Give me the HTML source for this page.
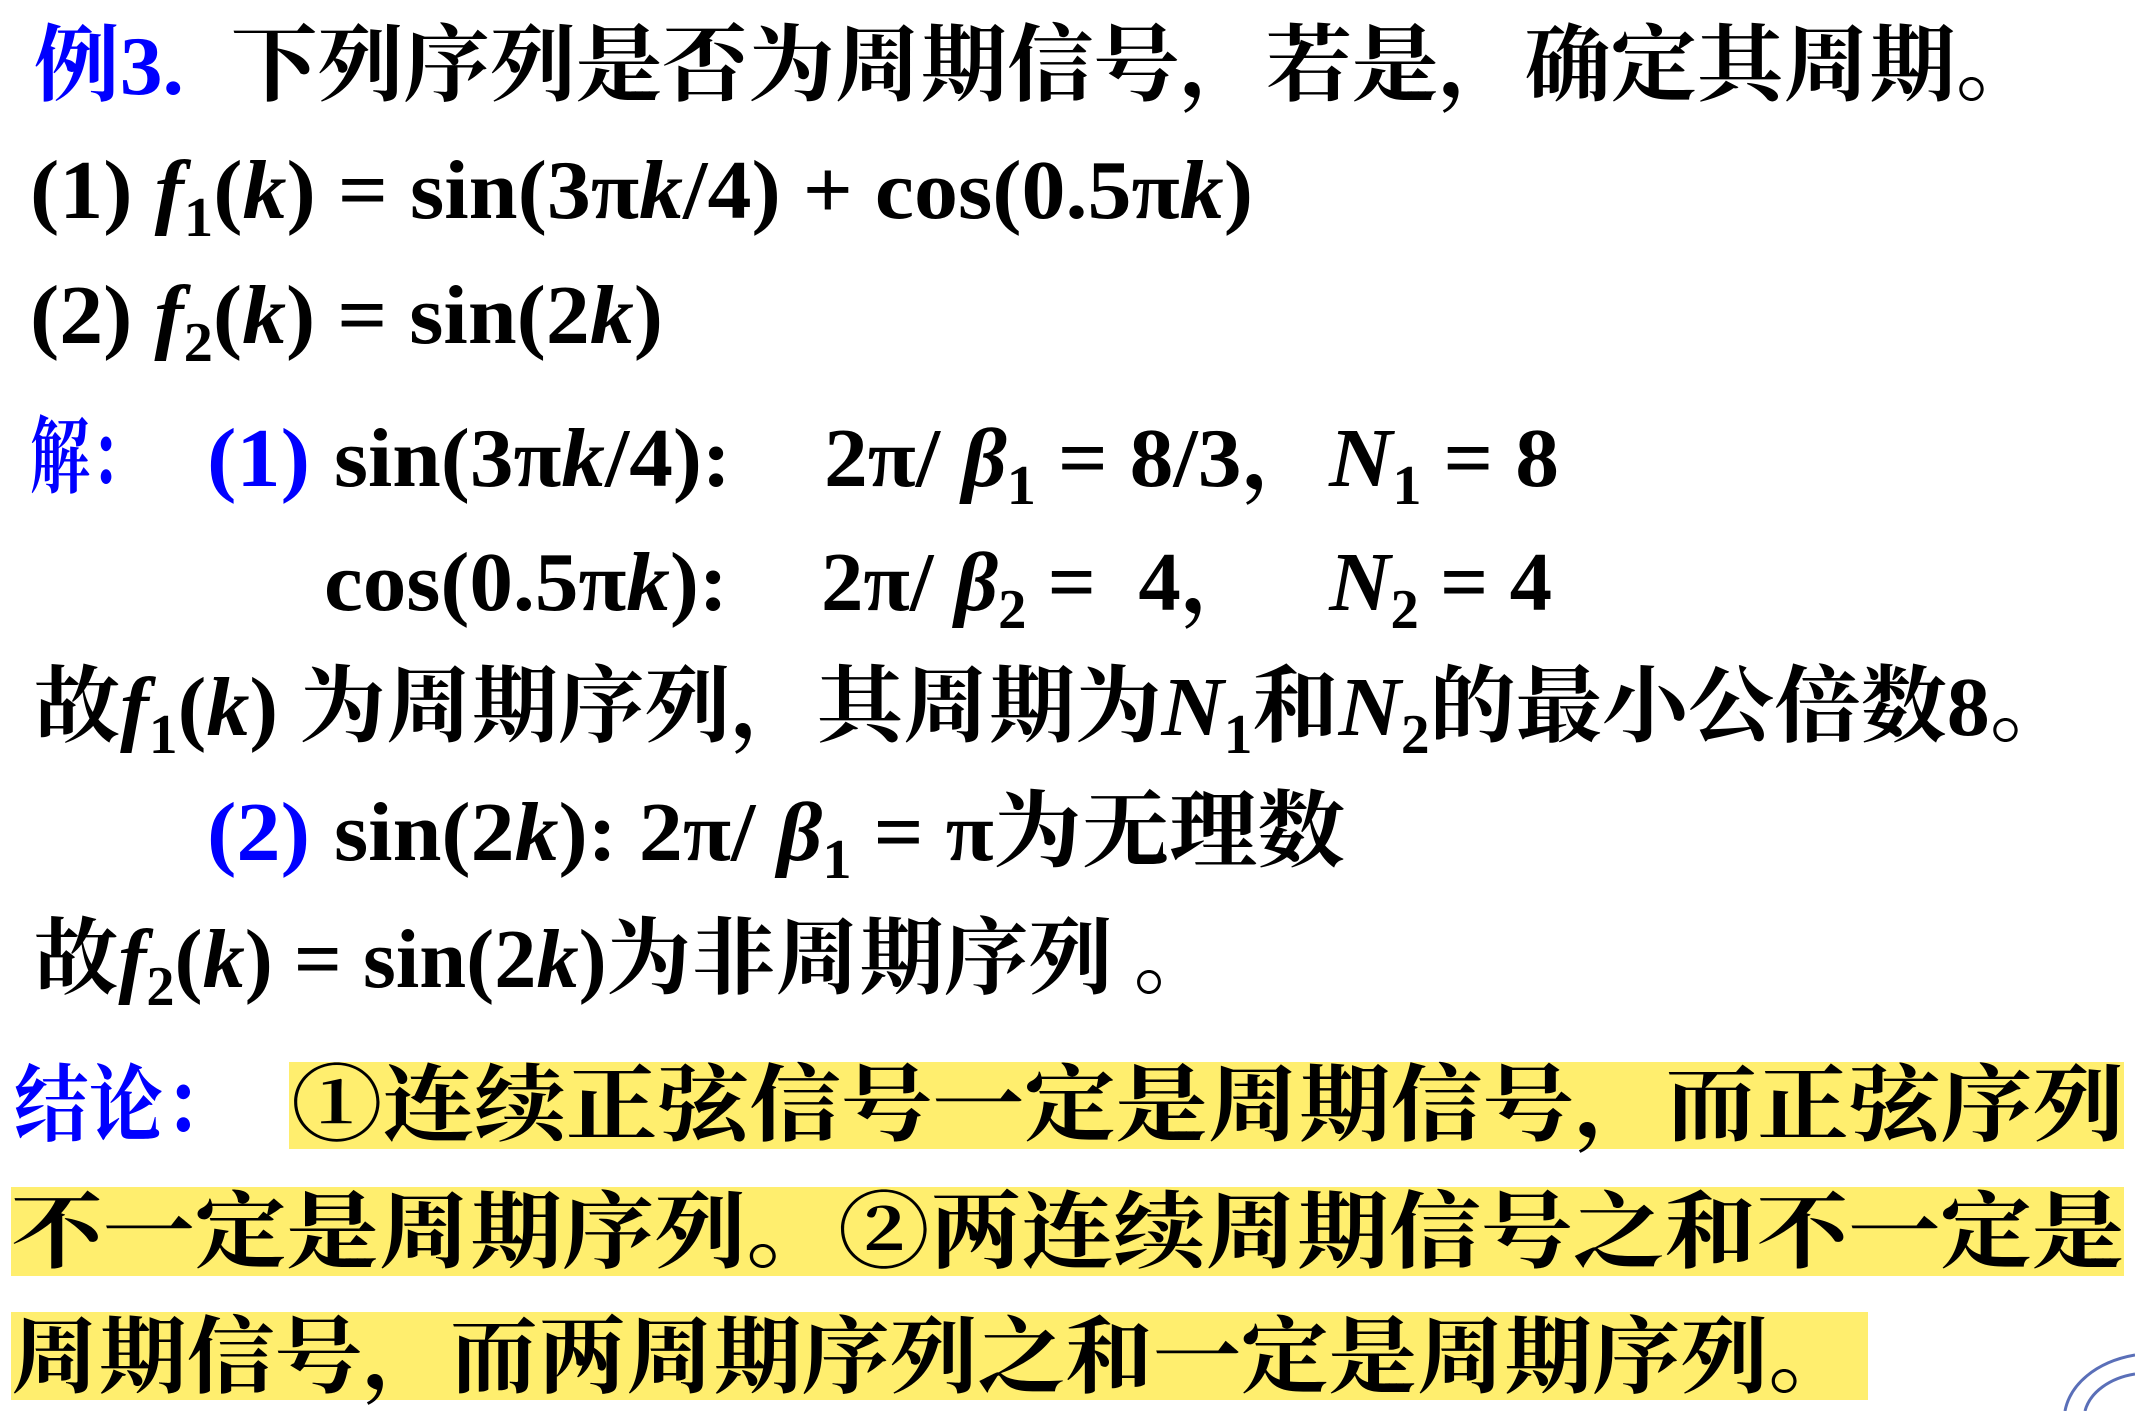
<!DOCTYPE html>
<html><head><meta charset="utf-8">
<style>
html,body{margin:0;padding:0;background:#fff;}
svg{display:block;}
.m{font-family:"Liberation Serif","Noto Serif CJK SC",serif;font-weight:bold;}
.c{font-family:"Liberation Serif","Noto Serif CJK SC","Noto Sans CJK SC",serif;font-weight:bold;}
.i{font-style:italic;}
.b{fill:#0000ff;}
</style></head>
<body>
<svg width="2135" height="1411" viewBox="0 0 2135 1411" xmlns="http://www.w3.org/2000/svg">
<rect x="289" y="1062" width="1835" height="87" fill="#ffee6e"/>
<rect x="11" y="1187" width="2113" height="89" fill="#ffee6e"/>
<rect x="11" y="1312" width="1857" height="88" fill="#ffee6e"/>

<g font-size="84">
<text class="c b" x="34" y="94" textLength="150" lengthAdjust="spacingAndGlyphs">例3.</text>
<text class="c" x="231" y="94" textLength="1811" lengthAdjust="spacingAndGlyphs">下列序列是否为周期信号，若是，确定其周期。</text>

<text class="m" x="30" y="218" textLength="1223" lengthAdjust="spacingAndGlyphs">(1) <tspan class="i">f</tspan><tspan font-size="56" dy="18">1</tspan><tspan dy="-18">(</tspan><tspan class="i">k</tspan>) = sin(3π<tspan class="i">k</tspan>/4) + cos(0.5π<tspan class="i">k</tspan>)</text>

<text class="m" x="30" y="343" textLength="633" lengthAdjust="spacingAndGlyphs">(2) <tspan class="i">f</tspan><tspan font-size="56" dy="18">2</tspan><tspan dy="-18">(</tspan><tspan class="i">k</tspan>) = sin(2<tspan class="i">k</tspan>)</text>

<text class="c b" x="30" y="486" textLength="120" lengthAdjust="spacingAndGlyphs">解：</text>
<text class="m b" x="207" y="486" textLength="103" lengthAdjust="spacingAndGlyphs">(1)</text>
<text class="m" x="334" y="486" textLength="397" lengthAdjust="spacingAndGlyphs">sin(3π<tspan class="i">k</tspan>/4):</text>
<text class="m" x="824" y="486" textLength="735" lengthAdjust="spacingAndGlyphs">2π/ <tspan class="i">β</tspan><tspan font-size="56" dy="18">1</tspan><tspan dy="-18"> = 8/3，</tspan><tspan class="i">N</tspan><tspan font-size="56" dy="18">1</tspan><tspan dy="-18"> = 8</tspan></text>

<text class="m" x="324" y="610" textLength="404" lengthAdjust="spacingAndGlyphs">cos(0.5π<tspan class="i">k</tspan>):</text>
<text class="m" x="821" y="610" textLength="731" lengthAdjust="spacingAndGlyphs" xml:space="preserve">2π/ <tspan class="i">β</tspan><tspan font-size="56" dy="18">2</tspan><tspan dy="-18"> =  4，   </tspan><tspan class="i">N</tspan><tspan font-size="56" dy="18">2</tspan><tspan dy="-18"> = 4</tspan></text>

<text class="c" x="34" y="735" textLength="2042" lengthAdjust="spacingAndGlyphs">故<tspan class="i">f</tspan><tspan font-size="56" dy="18">1</tspan><tspan dy="-18">(</tspan><tspan class="i">k</tspan>) 为周期序列，其周期为<tspan class="i">N</tspan><tspan font-size="56" dy="18">1</tspan><tspan dy="-18">和</tspan><tspan class="i">N</tspan><tspan font-size="56" dy="18">2</tspan><tspan dy="-18">的最小公倍数8。</tspan></text>

<text class="m b" x="207" y="860" textLength="103" lengthAdjust="spacingAndGlyphs">(2)</text>
<text class="c" x="334" y="860" textLength="1011" lengthAdjust="spacingAndGlyphs">sin(2<tspan class="i">k</tspan>): 2π/ <tspan class="i">β</tspan><tspan font-size="56" dy="18">1</tspan><tspan dy="-18"> = π为无理数</tspan></text>

<text class="c" x="34" y="987" textLength="1184" lengthAdjust="spacingAndGlyphs">故<tspan class="i">f</tspan><tspan font-size="56" dy="18">2</tspan><tspan dy="-18">(</tspan><tspan class="i">k</tspan>) = sin(2<tspan class="i">k</tspan>)为非周期序列 。</text>

<text class="c b" x="14" y="1134" textLength="224" lengthAdjust="spacingAndGlyphs">结论：</text>
<text class="c" x="291" y="1134" textLength="1833" lengthAdjust="spacingAndGlyphs">①连续正弦信号一定是周期信号，而正弦序列</text>
<text class="c" x="11" y="1261" textLength="2113" lengthAdjust="spacingAndGlyphs">不一定是周期序列。②两连续周期信号之和不一定是</text>
<text class="c" x="11" y="1386" textLength="1845" lengthAdjust="spacingAndGlyphs">周期信号，而两周期序列之和一定是周期序列。</text>
</g>

<g fill="none" stroke="#5a6fb8" stroke-width="3">
<path d="M2065 1411 C2070 1385 2095 1362 2135 1355"/>
<path d="M2085 1411 C2090 1392 2110 1378 2135 1374"/>
</g>
</svg>
</body></html>
